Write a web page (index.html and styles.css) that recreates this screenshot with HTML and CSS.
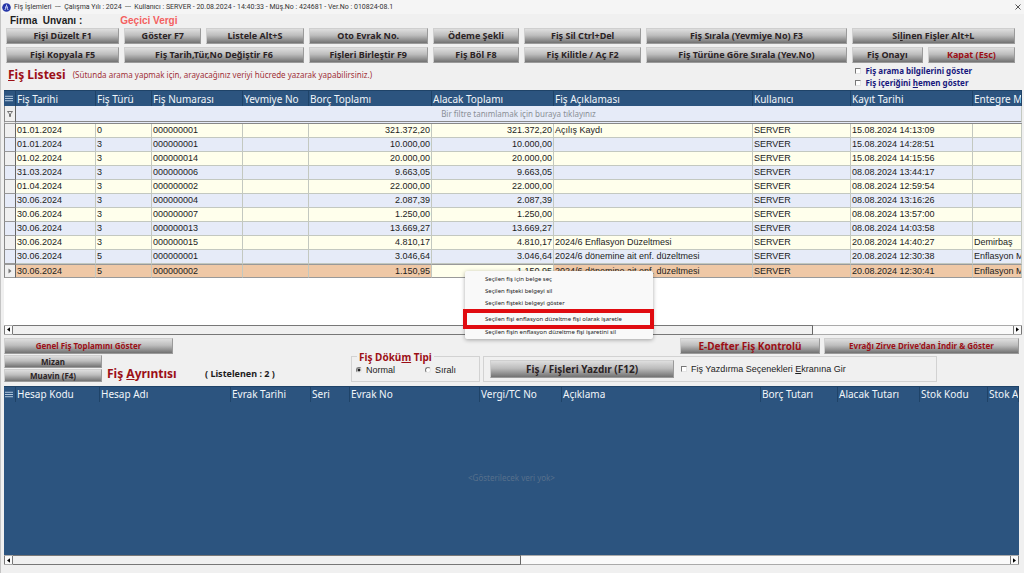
FILE: index.html
```html
<!DOCTYPE html>
<html lang="tr">
<head>
<meta charset="utf-8">
<meta name="viewport" content="width=device-width, initial-scale=1">
<title>Fiş İşlemleri</title>
<link rel="stylesheet" href="styles.css">
</head>
<body>
<header class="titlebar">
  <svg class="app-icon" viewBox="0 0 9 9" aria-hidden="true"><circle cx="4.5" cy="4.5" r="4.3" fill="#2636a8"/><path d="M4.5 1.6v2M3 4h3M3.6 4.2v1.6L2.8 7M5.4 4.2v1.6L6.2 7" stroke="#dfe6ff" stroke-width=".9" fill="none"/></svg>
  <span class="titlebar-text">Fiş İşlemleri &nbsp;--- &nbsp;Çalışma Yılı : 2024 &nbsp;--- &nbsp;Kullanıcı : SERVER - 20.08.2024 - 14:40:33 - Müş.No : 424681 - Ver.No : 010824-08.1</span>
  <button class="close" type="button" aria-label="Kapat"><svg viewBox="0 0 6 6"><path d="M.5.5l5 5M5.5.5l-5 5" stroke="#555" fill="none"/></svg></button>
</header>
<main class="page">
  <div class="company"><span class="company-label">Firma &nbsp;Unvanı :</span><span class="company-name">Geçici Vergi</span></div>

  <div class="toolbar">
    <button class="btn" type="button">Fişi Düzelt F1</button>
    <button class="btn" type="button">Göster F7</button>
    <button class="btn" type="button">Listele Alt+S</button>
    <button class="btn" type="button">Oto Evrak No.</button>
    <button class="btn" type="button">Ödeme Şekli</button>
    <button class="btn" type="button">Fiş Sil Ctrl+Del</button>
    <button class="btn" type="button">Fiş Sırala (Yevmiye No) F3</button>
    <button class="btn span-2" type="button">Si<u>l</u>inen Fişler Alt+L</button>
    <button class="btn" type="button">Fişi Kopyala F5</button>
    <button class="btn span-2" type="button">Fiş Tarih,Tür,No Değiştir F6</button>
    <button class="btn" type="button">Fişleri Birleştir F9</button>
    <button class="btn" type="button">Fiş Böl F8</button>
    <button class="btn" type="button">Fiş Kilitle / Aç F2</button>
    <button class="btn" type="button">Fiş Türüne Göre Sırala (Yev.No)</button>
    <button class="btn" type="button">Fiş Onayı</button>
    <button class="btn red" type="button">Kapat (Esc)</button>
  </div>

  <div class="list-head">
    <h1 class="heading"><u>F</u>iş Listesi</h1>
    <p class="hint">(Sütunda arama yapmak için, arayacağınız veriyi hücrede yazarak yapabilirsiniz.)</p>
    <div class="options">
      <label class="option"><input class="check" type="checkbox">Fiş arama bilgilerini göster</label>
      <label class="option"><input class="check" type="checkbox"><span>Fiş içeriğini <u>h</u>emen göster</span></label>
    </div>
  </div>

  <section class="grid grid-list">
    <div class="grid-body">
      <table class="table">
        <colgroup><col class="w-11"><col class="w-80"><col class="w-56"><col class="w-91"><col class="w-66"><col class="w-123"><col class="w-122"><col class="w-199"><col class="w-98"><col class="w-122"><col></colgroup>
        <thead>
          <tr><th><svg class="menu-icon" viewBox="0 0 9 7"><path d="M0 1h9M0 3.5h9M0 6h9" stroke="#c3d6ea"/></svg></th><th>Fiş Tarihi</th><th>Fiş Türü</th><th>Fiş Numarası</th><th>Yevmiye No</th><th>Borç Toplamı</th><th>Alacak Toplamı</th><th>Fiş Açıklaması</th><th>Kullanıcı</th><th>Kayıt Tarihi</th><th>Entegre M</th></tr>
        </thead>
        <tbody>
          <tr class="filter"><td class="mark"><svg class="filter-icon" viewBox="0 0 6 6"><path d="M.5.5h5L3.5 3v2.5h-1V3z" fill="none" stroke="#555" stroke-width=".8"/></svg></td><td colspan="10">Bir filtre tanımlamak için buraya tıklayınız</td></tr>
          <tr><td class="mark"></td><td>01.01.2024</td><td>0</td><td>000000001</td><td></td><td class="num">321.372,20</td><td class="num">321.372,20</td><td>Açılış Kaydı</td><td>SERVER</td><td>15.08.2024 14:13:09</td><td></td></tr>
          <tr><td class="mark"></td><td>01.01.2024</td><td>3</td><td>000000001</td><td></td><td class="num">10.000,00</td><td class="num">10.000,00</td><td></td><td>SERVER</td><td>15.08.2024 14:28:51</td><td></td></tr>
          <tr><td class="mark"></td><td>01.02.2024</td><td>3</td><td>000000014</td><td></td><td class="num">20.000,00</td><td class="num">20.000,00</td><td></td><td>SERVER</td><td>15.08.2024 14:15:56</td><td></td></tr>
          <tr><td class="mark"></td><td>31.03.2024</td><td>3</td><td>000000006</td><td></td><td class="num">9.663,05</td><td class="num">9.663,05</td><td></td><td>SERVER</td><td>08.08.2024 13:44:17</td><td></td></tr>
          <tr><td class="mark"></td><td>01.04.2024</td><td>3</td><td>000000002</td><td></td><td class="num">22.000,00</td><td class="num">22.000,00</td><td></td><td>SERVER</td><td>08.08.2024 12:59:54</td><td></td></tr>
          <tr><td class="mark"></td><td>30.06.2024</td><td>3</td><td>000000004</td><td></td><td class="num">2.087,39</td><td class="num">2.087,39</td><td></td><td>SERVER</td><td>08.08.2024 13:16:26</td><td></td></tr>
          <tr><td class="mark"></td><td>30.06.2024</td><td>3</td><td>000000007</td><td></td><td class="num">1.250,00</td><td class="num">1.250,00</td><td></td><td>SERVER</td><td>08.08.2024 13:57:00</td><td></td></tr>
          <tr><td class="mark"></td><td>30.06.2024</td><td>3</td><td>000000013</td><td></td><td class="num">13.669,27</td><td class="num">13.669,27</td><td></td><td>SERVER</td><td>08.08.2024 14:03:58</td><td></td></tr>
          <tr><td class="mark"></td><td>30.06.2024</td><td>3</td><td>000000015</td><td></td><td class="num">4.810,17</td><td class="num">4.810,17</td><td>2024/6 Enflasyon Düzeltmesi</td><td>SERVER</td><td>20.08.2024 14:40:27</td><td>Demirbaş</td></tr>
          <tr><td class="mark"></td><td>30.06.2024</td><td>5</td><td>000000001</td><td></td><td class="num">3.046,64</td><td class="num">3.046,64</td><td>2024/6 dönemine ait enf. düzeltmesi</td><td>SERVER</td><td>20.08.2024 12:30:38</td><td>Enflasyon M</td></tr>
          <tr class="selected"><td class="mark"><svg class="row-icon" viewBox="0 0 4 6"><path d="M.5.5L3.5 3l-3 2.5z" fill="#777"/></svg></td><td>30.06.2024</td><td>5</td><td>000000002</td><td></td><td class="num">1.150,95</td><td class="num active">1.150,95</td><td>2024/6 dönemine ait enf. düzeltmesi</td><td>SERVER</td><td>20.08.2024 12:30:41</td><td>Enflasyon M</td></tr>
        </tbody>
      </table>
    </div>
    <div class="scroll">
      <button class="arrow" type="button" aria-label="Sola kaydır"><svg viewBox="0 0 4 6"><path d="M4 0v6L0 3z"/></svg></button>
      <div class="track"><div class="thumb thumb-list"></div></div>
      <button class="arrow" type="button" aria-label="Sağa kaydır"><svg viewBox="0 0 4 6"><path d="M0 0v6l4-3z"/></svg></button>
    </div>
    <div class="menu" role="menu">
      <button class="item" type="button" role="menuitem">Seçilen fiş için belge seç</button>
      <button class="item" type="button" role="menuitem">Seçilen fişteki belgeyi sil</button>
      <button class="item" type="button" role="menuitem">Seçilen fişteki belgeyi göster</button>
      <button class="item framed" type="button" role="menuitem">Seçilen fişi enflasyon düzeltme fişi olarak işaretle</button>
      <button class="item" type="button" role="menuitem">Seçilen fişin enflasyon düzeltme fişi işaretini sil</button>
    </div>
  </section>

  <div class="row-totals">
    <button class="btn red small total" type="button">Genel Fiş Toplamını Göster</button>
    <button class="btn red ledger" type="button">E-Defter Fiş Kontrolü</button>
    <button class="btn red small drive" type="button">Evrağı Zirve Drive'dan İndir &amp; Göster</button>
  </div>

  <div class="row-detail">
    <div class="stack">
      <button class="btn" type="button">Mizan</button>
      <button class="btn" type="button">Muavin (F4)</button>
    </div>
    <h2 class="heading detail-title">Fiş <u>A</u>yrıntısı</h2>
    <span class="count">( Listelenen : 2 )</span>
    <fieldset class="dump">
      <legend>Fiş Dökü<u>m</u> Tipi</legend>
      <label class="choice"><input class="radio" type="radio" name="tip" checked>Normal</label>
      <label class="choice"><input class="radio" type="radio" name="tip">Sıralı</label>
    </fieldset>
    <div class="print">
      <button class="btn large" type="button">Fiş / Fişleri Yazdır (F12)</button>
      <label class="choice"><input class="check" type="checkbox"><span>Fiş Yazdırma Seçenekleri <u>E</u>kranına Gir</span></label>
    </div>
  </div>

  <section class="grid grid-detail">
    <div class="grid-body blue">
      <table class="table">
        <colgroup><col class="w-11"><col class="w-84"><col class="w-131"><col class="w-80"><col class="w-39"><col class="w-130"><col class="w-82"><col class="w-199"><col class="w-77"><col class="w-82"><col class="w-68"><col></colgroup>
        <thead>
          <tr><th><svg class="menu-icon" viewBox="0 0 9 7"><path d="M0 1h9M0 3.5h9M0 6h9" stroke="#c3d6ea"/></svg></th><th>Hesap Kodu</th><th>Hesap Adı</th><th>Evrak Tarihi</th><th>Seri</th><th>Evrak No</th><th>Vergi/TC No</th><th>Açıklama</th><th>Borç Tutarı</th><th>Alacak Tutarı</th><th>Stok Kodu</th><th>Stok A</th></tr>
        </thead>
      </table>
      <p class="empty">&lt;Gösterilecek veri yok&gt;</p>
    </div>
    <div class="scroll">
      <button class="arrow" type="button" aria-label="Sola kaydır"><svg viewBox="0 0 4 6"><path d="M4 0v6L0 3z"/></svg></button>
      <div class="track"><div class="thumb thumb-detail"></div></div>
      <button class="arrow" type="button" aria-label="Sağa kaydır"><svg viewBox="0 0 4 6"><path d="M0 0v6l4-3z"/></svg></button>
    </div>
  </section>
</main>
</body>
</html>
```

FILE: styles.css
```css
* { box-sizing: border-box; }

body {
  margin: 0;
  min-height: 100vh;
  display: flex;
  flex-direction: column;
  background: #f0f0f0;
  border-left: 1px solid #c4c4c4;
  color: #1c1c1c;
  font: 9px/12px "Noto Sans", "Open Sans", sans-serif;
}

button { font: inherit; color: inherit; padding: 0; border: 0; background: none; }
h1, h2, p { margin: 0; }
svg { display: block; }

/* Window title */
.titlebar {
  display: flex;
  align-items: center;
  gap: 3px;
  height: 14px;
  padding: 0 3px 0 1px;
  background: #f5f5f5;
  font-family: Roboto, sans-serif;
  font-size: 7px;
  color: #333;
}
.app-icon { width: 9px; height: 9px; }
.titlebar-text { flex: 1; white-space: nowrap; }
.close svg { width: 6px; height: 6px; }

.page { flex: 1; display: flex; flex-direction: column; padding: 0 2px 8px 3px; }

.company {
  display: flex;
  gap: 38px;
  height: 14px;
  padding-left: 6px;
  font: bold 10px/14px "Liberation Sans", Arial, sans-serif;
}
.company-name { color: #f4605f; }

/* Buttons */
.btn {
  height: 16px;
  border: 1px solid #9a9a9a;
  border-top-color: #cfcfcf;
  border-left-color: #cfcfcf;
  background: linear-gradient(#dedede, #bdbdbd 45%, #727272);
  font-weight: bold;
  font-size: 9px;
  line-height: 14px;
  color: #2b2325;
  text-align: center;
  white-space: nowrap;
}
.red { color: #9c0f16; }
.small { font-size: 8px; }
.large { font-size: 10px; }

.toolbar {
  display: grid;
  grid-template-columns: 113fr 77fr 97fr 119fr 86fr 117fr 200fr 71fr 87fr;
  gap: 3px 5px;
  padding: 0 7px 0 2px;
}
.span-2 { grid-column: span 2; }

/* List heading */
.list-head { display: flex; align-items: center; height: 27px; padding: 0 50px 4px 4px; }
.heading { font-size: 12px; line-height: 16px; color: #9c0f16; white-space: nowrap; }
.hint { flex: 1; margin-left: 7px; font-size: 8px; color: #a03038; white-space: nowrap; }
.options { display: flex; flex-direction: column; align-self: flex-start; padding-top: 2px; }
.option { display: flex; align-items: center; gap: 4px; font-size: 8px; font-weight: bold; color: #17177c; white-space: nowrap; }

.check, .radio {
  appearance: none;
  flex: none;
  width: 6px;
  height: 6px;
  margin: 0;
  background: #fff;
  border: 1px solid #e4e4e4;
  border-top-color: #777;
  border-left-color: #777;
}
.radio { border-radius: 50%; }
.radio:checked { background: radial-gradient(#222 0 1px, #fff 2px); }

/* Grids */
.grid { position: relative; display: flex; flex-direction: column; }
.grid-list { flex: 244 1 0; background: #fff; }
.grid-detail { flex: 179 1 0; margin-right: 3px; }
.grid-body { flex: 1; overflow: hidden; }
.blue { display: flex; flex-direction: column; background: #2c547f; }

.table { width: 100%; table-layout: fixed; border-collapse: separate; border-spacing: 0; }
.table th {
  height: 16px;
  padding: 0 0 0 1px;
  overflow: hidden;
  background: #2c547f;
  border-right: 1px solid #1f4368;
  border-top: 1px solid #1f4368;
  color: #f2f6fa;
  font-weight: normal;
  font-size: 10px;
  line-height: 14px;
  text-align: left;
  white-space: nowrap;
}
.menu-icon { width: 8px; height: 7px; }
.table td {
  height: 14px;
  padding: 0 1px;
  overflow: hidden;
  background: #ffffec;
  border-right: 1px solid #c3c8c0;
  border-bottom: 1px solid #c3c8c0;
  font: 9px/13px "Liberation Sans", Arial, sans-serif;
  white-space: nowrap;
}
.table tr:nth-child(odd) td { background: #e6ebf8; }
.table .num { text-align: right; }
.table .filter td {
  height: 18px;
  border-bottom: 3px double #888;
  background: #e6eefa;
  color: #8a8f96;
  font-family: "Noto Sans", sans-serif;
  font-size: 8px;
  text-align: center;
}
.table .selected td { background: #efc8a6; border-top: 1px solid #999; border-bottom-color: #999; line-height: 12px; }
.table .selected .active { background: #ffffec; }
.table tr .mark, .table .filter .mark, .table .selected .mark { background: #f0f0f0; border-left: 1px solid #888; border-right-color: #666; border-bottom-color: #999; }
.filter-icon { width: 6px; height: 6px; margin: auto; }
.row-icon { width: 4px; height: 6px; margin: auto; }

.w-11 { width: 12px; }
.w-39 { width: 39px; }
.w-56 { width: 56px; }
.w-66 { width: 66px; }
.w-68 { width: 68px; }
.w-77 { width: 77px; }
.w-80 { width: 80px; }
.w-82 { width: 82px; }
.w-84 { width: 84px; }
.w-91 { width: 91px; }
.w-98 { width: 98px; }
.w-122 { width: 122px; }
.w-123 { width: 123px; }
.w-130 { width: 130px; }
.w-131 { width: 131px; }
.w-199 { width: 199px; }

.empty { margin: auto; font-size: 8px; color: #57708c; }

.scroll { display: flex; height: 10px; background: #fafafa; border-top: 1px solid #aaa; border-bottom: 1px solid #aaa; }
.arrow { display: grid; place-items: center; width: 9px; border: 1px solid #777; border-width: 0 1px; background: #fafafa; }
.arrow svg { width: 3px; height: 5px; }
.track { flex: 1; display: flex; }
.thumb { background: #f0f0f0; border-right: 1px solid #666; box-shadow: 0 -1px #777, 0 1px #777; }
.thumb-list { width: 80%; }
.thumb-detail { width: 51%; }

/* Context menu */
.menu {
  position: absolute;
  left: 461px;
  top: 181px;
  width: 188px;
  padding: 2px 0 1px;
  display: flex;
  flex-direction: column;
  background: #f9f9f9;
  border-radius: 2px;
  box-shadow: 0 1px 4px #0005;
}
.item { height: 12px; padding-left: 20px; font-size: 6px; line-height: 12px; text-align: left; white-space: nowrap; }
.framed { position: relative; height: 20px; margin: 0 -1px -3px -2px; padding-left: 18px; border: 4px solid #e00b10; }

/* Totals and detail rows */
.row-totals { display: flex; gap: 4px; padding: 3px 3px 0 0; }
.total { width: 169px; margin-right: auto; }
.ledger { width: 140px; font-size: 10px; }
.drive { width: 195px; }

.row-detail { display: flex; align-items: flex-end; height: 32px; padding-bottom: 4px; }
.stack { display: flex; flex-direction: column; gap: 1px; width: 98px; }
.stack .btn { height: 13px; font-size: 8px; line-height: 11px; }
.detail-title { margin-left: 5px; width: 98px; }
.count { width: 146px; font-weight: bold; line-height: 16px; }

.dump, .print { display: flex; align-items: center; height: 26px; margin: 0; border: 1px solid #d2d2d2; }
.dump { position: relative; width: 129px; padding: 2px 4px 0; gap: 30px; }
.dump legend {
  position: absolute;
  left: 5px;
  top: -7px;
  padding: 0 2px;
  background: #f0f0f0;
  font-size: 10px;
  font-weight: bold;
  line-height: 14px;
  color: #9c0f16;
  white-space: nowrap;
}
.choice { display: flex; align-items: center; gap: 4px; font: 9px/12px "Liberation Sans", Arial, sans-serif; white-space: nowrap; }
.print { width: 454px; margin-left: 3px; padding-left: 6px; gap: 7px; }
.print .btn { width: 184px; height: 18px; }
```
